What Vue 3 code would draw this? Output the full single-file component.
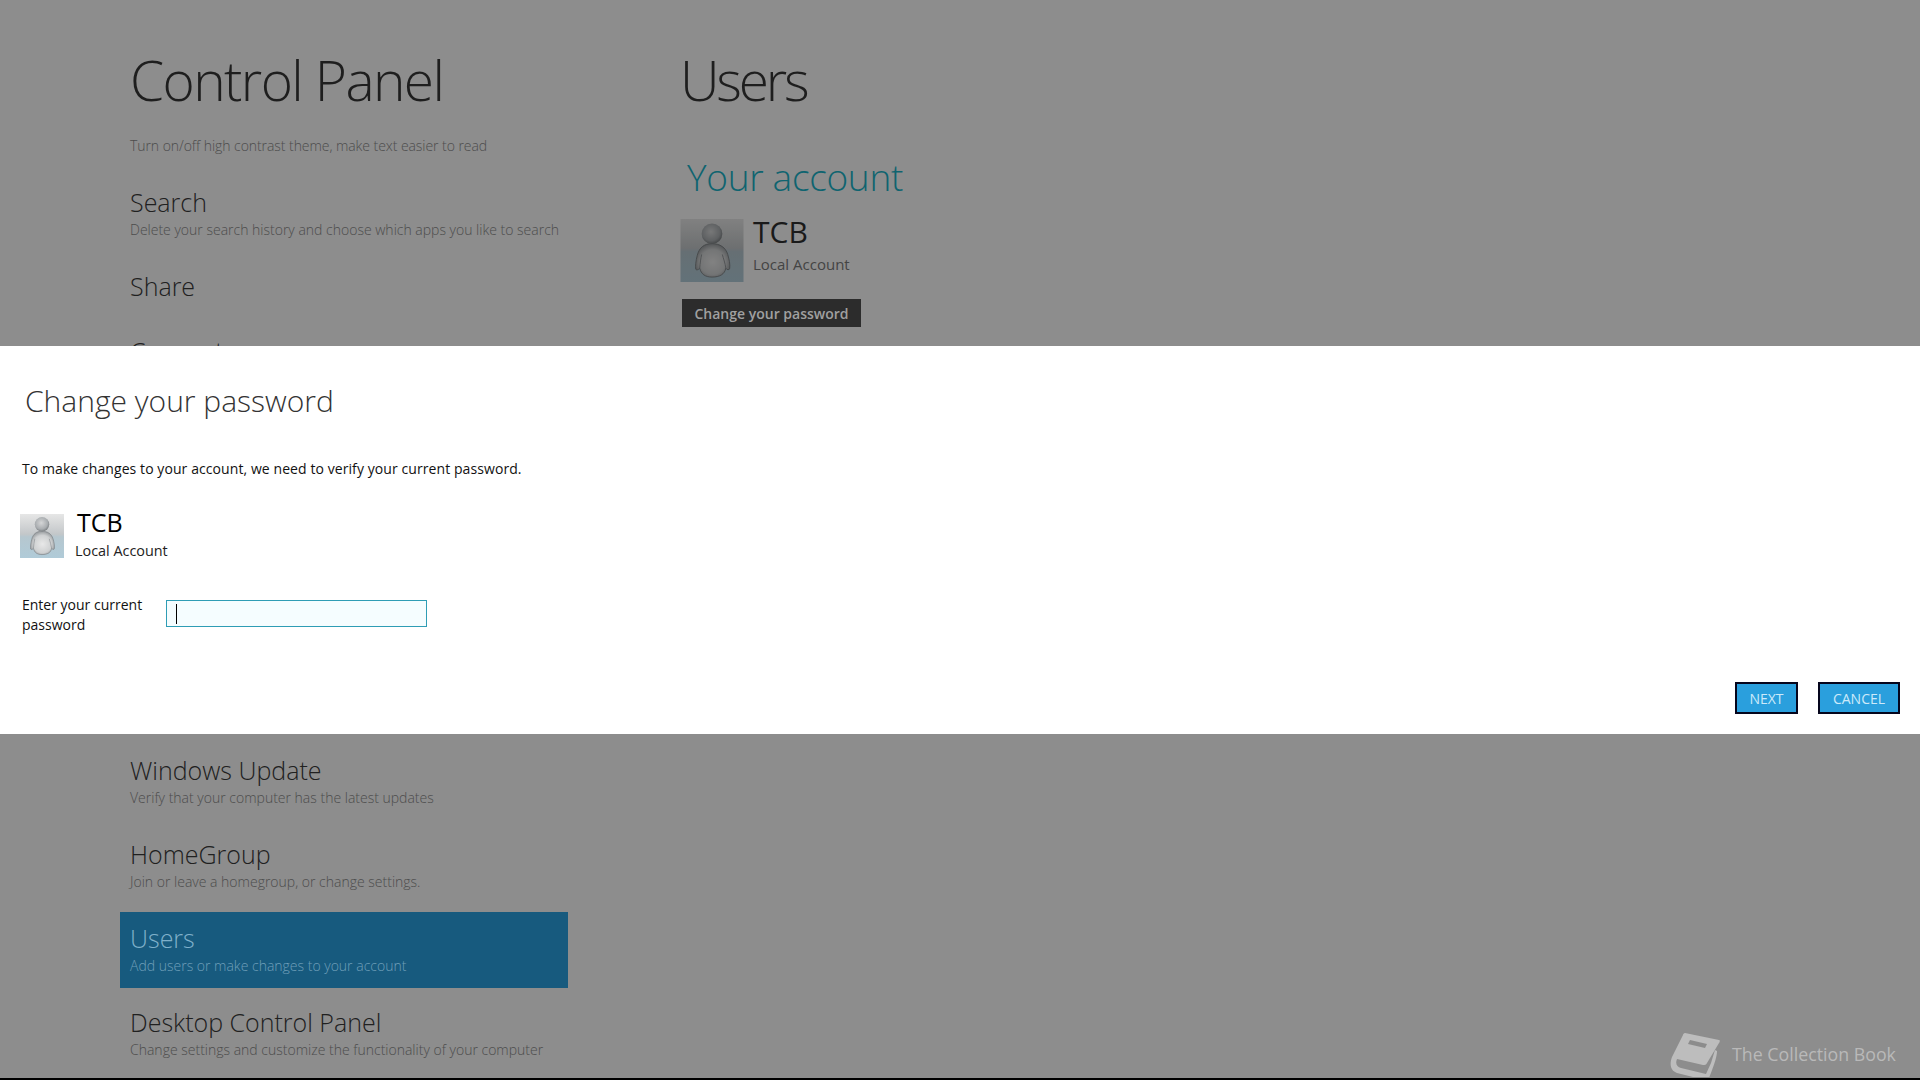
<script setup>
const topItems = [
  { title: 'Search', desc: 'Delete your search history and choose which apps you like to search' },
  { title: 'Share', desc: '' },
  { title: 'Connect', desc: '' }
]
const bottomItems = [
  { title: 'Windows Update', desc: 'Verify that your computer has the latest updates' },
  { title: 'HomeGroup', desc: 'Join or leave a homegroup, or change settings.' },
  { title: 'Users', desc: 'Add users or make changes to your account', active: true },
  { title: 'Desktop Control Panel', desc: 'Change settings and customize the functionality of your computer' }
]
</script>

<template>
  <div class="screen">
    <div class="page">
      <aside class="side">
        <h1 class="h1">Control Panel</h1>
        <p class="lead">Turn on/off high contrast theme, make text easier to read</p>
        <div class="top-list">
          <div v-for="i in topItems" :key="i.title" class="item" :class="{ bare: !i.desc }">
            <div class="item-title">{{ i.title }}</div>
            <div v-if="i.desc" class="item-desc">{{ i.desc }}</div>
          </div>
        </div>
        <div class="bottom-list">
          <div v-for="i in bottomItems" :key="i.title" class="item" :class="{ active: i.active }">
            <div class="item-title">{{ i.title }}</div>
            <div class="item-desc">{{ i.desc }}</div>
          </div>
        </div>
      </aside>
      <main class="content">
        <h1 class="h1">Users</h1>
        <h2 class="section">Your account</h2>
        <div class="account">
          <svg class="avatar big dim" viewBox="0 0 64 64">
            <defs>
              <linearGradient id="bgA" x1="0" y1="0" x2="0" y2="1">
                <stop offset="0" stop-color="#e6e6e6" />
                <stop offset="0.46" stop-color="#c3c7c9" />
                <stop offset="0.52" stop-color="#b6c7cf" />
                <stop offset="1" stop-color="#b0cbd8" />
              </linearGradient>
              <radialGradient id="fgA" cx="0.5" cy="0.55" r="0.62">
                <stop offset="0" stop-color="#e8e8e8" />
                <stop offset="0.6" stop-color="#cfd1d2" />
                <stop offset="0.9" stop-color="#93979a" />
                <stop offset="1" stop-color="#6f7376" />
              </radialGradient>
              <radialGradient id="headA" cx="0.45" cy="0.4" r="0.62">
                <stop offset="0" stop-color="#d5d6d7" />
                <stop offset="0.7" stop-color="#a9adb0" />
                <stop offset="1" stop-color="#777b7e" />
              </radialGradient>
            </defs>
            <rect width="64" height="64" fill="url(#bgA)" />
            <path d="M32 25C24 25 19 29 17 37c-1.500 6-2 11-1.500 14 .5 1 2.500 1 4-1 1.500 6 5.500 9 12.500 9 8 0 13-3 14-9 1 2 4 2 4 0 .5-4-.5-9-2-14-2-7-8-11-16-11z" fill="url(#fgA)" stroke="#74787b" stroke-width=".8" />
            <path d="M21.500 36c-1 4-1.500 9-2 14M42.500 36c1 4 3 9 3.500 14" fill="none" stroke="#909497" stroke-width="1" />
            <circle cx="32" cy="15" r="10.500" fill="url(#headA)" />
          </svg>
          <div class="account-text">
            <div class="name">TCB</div>
            <div class="kind">Local Account</div>
          </div>
        </div>
        <button class="dark-btn">Change your password</button>
      </main>
    </div>

    <section class="dialog">
      <h2 class="dlg-title">Change your password</h2>
      <p class="dlg-text">To make changes to your account, we need to verify your current password.</p>
      <div class="dlg-user">
        <svg class="avatar small" viewBox="0 0 64 64">
          <rect width="64" height="64" fill="url(#bgA)" />
          <path d="M32 25C24 25 19 29 17 37c-1.500 6-2 11-1.500 14 .5 1 2.500 1 4-1 1.500 6 5.500 9 12.500 9 8 0 13-3 14-9 1 2 4 2 4 0 .5-4-.5-9-2-14-2-7-8-11-16-11z" fill="url(#fgA)" stroke="#74787b" stroke-width=".8" />
          <path d="M21.500 36c-1 4-1.500 9-2 14M42.500 36c1 4 3 9 3.500 14" fill="none" stroke="#909497" stroke-width="1" />
          <circle cx="32" cy="15" r="10.500" fill="url(#headA)" />
        </svg>
        <div>
          <div class="dlg-name">TCB</div>
          <div class="dlg-kind">Local Account</div>
        </div>
      </div>
      <div class="field">
        <label class="field-label">Enter your current password</label>
        <div class="input"><span class="caret"></span></div>
      </div>
      <div class="actions">
        <button class="blue-btn next">NEXT</button>
        <button class="blue-btn cancel">CANCEL</button>
      </div>
    </section>

    <div class="mark">
      <svg class="book" viewBox="0 0 50 46">
        <path d="M15 2 49 9c1 0 1 2 0 3L37 32c-1 2-2 2-4 2L7 28c-2 5 0 8 4 9l25 6 5-11 4-13 2 1c0 5-2 12-8 27-1 2-2 3-4 2L7 42C1 40-1 34 2 26L13 4c0-1 1-2 2-2z" fill="#bdbdbd" />
        <path d="M20 9l17 4-2 4-17-4z" fill="#8c8c8c" />
      </svg>
      <span class="mark-text">The Collection Book</span>
    </div>
  </div>
</template>

<style scoped>
.screen {
  position: relative;
  width: 1920px;
  height: 1080px;
  overflow: hidden;
  background: #8d8d8d;
  border-bottom: 2px solid #000;
  box-sizing: border-box;
  font-family: "Open Sans", "Liberation Sans", sans-serif;
  color: #1c1c1c;
}
.page {
  display: flex;
}
.side {
  width: 560px;
  margin-left: 120px;
}
h1, h2, p {
  margin: 0;
  font-weight: 300;
}
.h1 {
  font-size: 55px;
  line-height: 72px;
  margin-top: 43.5px;
  letter-spacing: -1.6px;
  color: #1e1e1e;
}
.side .h1 {
  margin-left: 10px;
}
.content .h1 {
  letter-spacing: -3.2px;
}
.lead {
  margin: 20.5px 0 0 10px;
  font-size: 14px;
  line-height: 20px;
  color: #4c4c4c;
  letter-spacing: -0.06px;
  font-weight: 300;
}
.top-list {
  margin-top: 20.5px;
  height: 567px;
}
.item {
  height: 76px;
  width: 448px;
  margin-bottom: 8px;
  padding: 7px 0 0 10px;
  box-sizing: border-box;
}
.bottom-list .item {
  padding-top: 8px;
}
.item.bare {
  height: 57px;
}
.item-title {
  font-size: 25px;
  line-height: 36px;
  font-weight: 300;
  color: #202020;
}
.item-desc {
  font-size: 14px;
  line-height: 20px;
  color: #4c4c4c;
  font-weight: 300;
  white-space: nowrap;
}
.item.active {
  background: #175a7e;
}
.active .item-title {
  color: #7fb0ca;
}
.active .item-desc {
  color: #6f9fb9;
}
.section {
  margin: 36.5px 0 0 7px;
  font-size: 37px;
  line-height: 50px;
  letter-spacing: -0.3px;
  color: #0f6470;
  font-weight: 300;
}
.account {
  display: flex;
  margin-top: 17px;
  gap: 9px;
}
.account-text {
  margin-top: -5px;
}
.avatar {
  display: block;
}
.big {
  width: 64px;
  height: 63px;
}
.dim {
  filter: brightness(0.56);
}
.name {
  font-size: 30px;
  line-height: 36px;
  color: #1a1a1a;
}
.kind {
  font-size: 15px;
  line-height: 22px;
  margin-top: 3px;
  color: #444;
}
.dark-btn {
  display: block;
  margin: 17px 0 0 2px;
  width: 179px;
  height: 28px;
  padding: 0;
  border: 0;
  background: #2c2c2c;
  color: #a0a0a0;
  font: 600 14px "Open Sans", sans-serif;
}
.dialog {
  position: absolute;
  left: 0;
  top: 346px;
  width: 100%;
  height: 388px;
  box-sizing: border-box;
  background: #fff;
  color: #000;
  padding: 0 20px;
  display: flex;
  flex-direction: column;
}
.dlg-title {
  margin: 33px 0 0 5px;
  font-size: 30px;
  line-height: 44px;
  color: #333;
}
.dlg-text {
  margin: 35.5px 0 0 2px;
  font-size: 14px;
  line-height: 20px;
  letter-spacing: 0.08px;
  font-weight: 400;
  color: #111;
}
.dlg-user {
  display: flex;
  margin-top: 28.5px;
  gap: 11px;
}
.small {
  width: 44px;
  height: 44px;
  margin-top: 7px;
}
.dlg-name {
  font-size: 25px;
  line-height: 30px;
  margin-left: 2px;
  color: #000;
}
.dlg-kind {
  font-size: 14.4px;
  line-height: 20px;
  margin-top: 4px;
  color: #222;
}
.field {
  display: flex;
  margin-top: 34px;
  margin-left: 2px;
}
.field-label {
  width: 144px;
  font-size: 14px;
  line-height: 20px;
  color: #111;
}
.input {
  width: 261px;
  height: 27px;
  box-sizing: border-box;
  border: 1px solid #2f9db5;
  background: #f5fdff;
  margin-top: 5px;
  padding: 3px 9px;
}
.caret {
  display: block;
  width: 1px;
  height: 20px;
  background: #000;
}
.actions {
  margin-top: auto;
  margin-bottom: 20px;
  display: flex;
  justify-content: flex-end;
  gap: 20px;
}
.blue-btn {
  height: 32px;
  box-sizing: border-box;
  border: 2px solid #05051c;
  background: #2a9fdd;
  color: #cdeafa;
  font: 400 14px "Open Sans", sans-serif;
  padding: 0;
}
.next {
  width: 63px;
}
.cancel {
  width: 82px;
}
.mark {
  position: absolute;
  left: 1670px;
  top: 1031px;
  display: flex;
  align-items: center;
  gap: 12px;
}
.book {
  width: 50px;
  height: 46px;
}
.mark-text {
  font-size: 17.8px;
  color: #b9b9b9;
  white-space: nowrap;
}
</style>
